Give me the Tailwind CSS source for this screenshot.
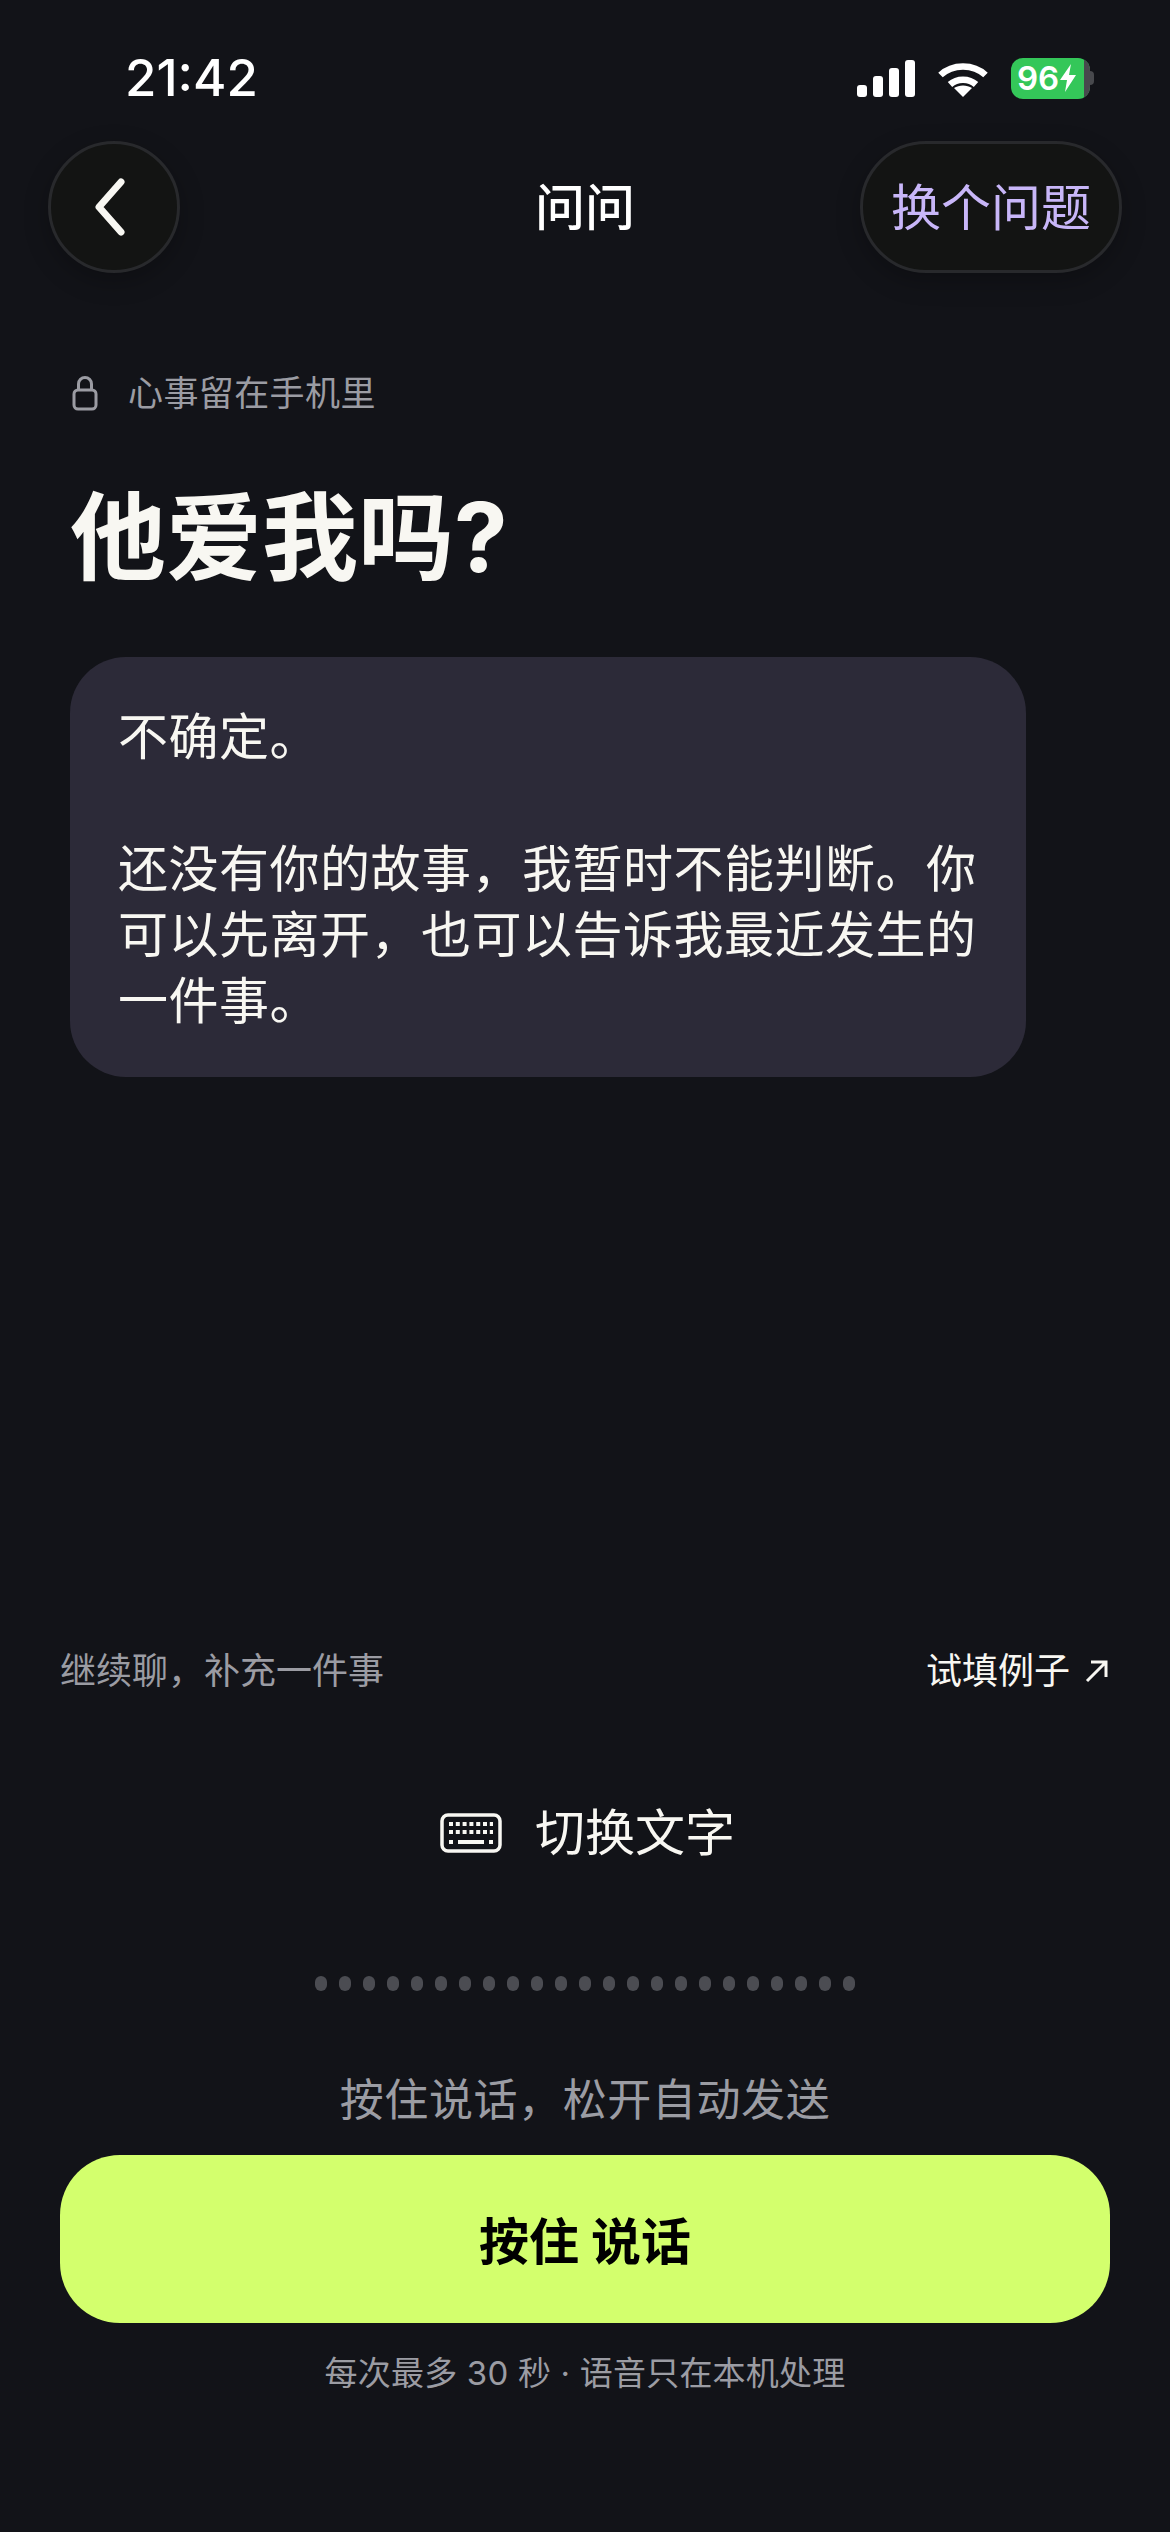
<!DOCTYPE html>
<html lang="zh-CN">
<head>
  <meta charset="UTF-8" />
  <meta name="viewport" content="width=device-width, initial-scale=1.0" />
  <title>问问</title>
  <script src="https://cdn.jsdelivr.net/npm/@tailwindcss/browser@4"></script>
</head>
<body class="bg-[#121318]">
  <div class="w-[1170px] h-[2532px] flex flex-col bg-[#121318] text-[#f8f7f2] font-['Inter','Noto_Sans_CJK_SC',sans-serif]">

    <!-- Status bar -->
    <div class="h-[141px] pt-[56px] pl-[125px] pr-[76px] flex items-start justify-between">
      <span class="text-[51px] leading-[44px] font-medium text-white">21:42</span>
      <div class="flex items-center gap-[22px] h-[44px]">
        <div class="flex items-end gap-[6px] h-[37px]">
          <div class="w-[10px] h-[12px] rounded-[3px] bg-white"></div>
          <div class="w-[10px] h-[21px] rounded-[3px] bg-white"></div>
          <div class="w-[10px] h-[29px] rounded-[3px] bg-white"></div>
          <div class="w-[10px] h-[37px] rounded-[3px] bg-white"></div>
        </div>
        <svg class="w-[52px] h-[37px]" viewBox="0 0 52 37" fill="none">
          <path d="M3.5 15C15.5 3.5 36.5 3.5 48.5 15" stroke="#fff" stroke-width="6.5" />
          <path d="M13 24.5C20 18 32 18 39 24.5" stroke="#fff" stroke-width="6.5" />
          <path d="M26 37L17 28C22 24.5 30 24.5 35 28Z" fill="#fff" />
        </svg>
        <div class="flex items-center">
          <div class="w-[79px] h-[41px] rounded-[12px] bg-[#34c759] overflow-hidden flex items-center pl-[6px]">
            <span class="text-[33px] leading-none font-semibold text-white">96</span>
            <svg class="w-[18px] h-[30px]" viewBox="0 0 18 30"><path d="M12 1L1 17H8L6 29L17 12H10Z" fill="#fff" /></svg>
            <div class="ml-auto w-[6px] h-full bg-[#48494d]"></div>
          </div>
          <div class="w-[4px] h-[14px] rounded-r-full bg-[#48494d]"></div>
        </div>
      </div>
    </div>

    <!-- Nav -->
    <div class="grid grid-cols-[262px_1fr_262px] items-center px-[48px]">
      <button class="w-[132px] h-[132px] rounded-full border-[3px] border-[#28292c] bg-[#131413] flex items-center justify-center shadow-[0_8px_24px_rgba(0,0,0,0.25)]">
        <svg class="w-[44px] h-[60px] mr-[8px]" viewBox="0 0 44 60" fill="none"><path d="M33 5L11 30L33 55" stroke="#f8f7f2" stroke-width="7" stroke-linecap="round" stroke-linejoin="round" /></svg>
      </button>
      <h1 class="text-center text-[50px] leading-none font-medium text-white pt-[2px]">问问</h1>
      <button class="w-[262px] h-[132px] rounded-full border-[3px] border-[#28292c] bg-[#131413] text-[#c8b6f8] text-[50px] leading-none pt-[2px] shadow-[0_8px_24px_rgba(0,0,0,0.25)]">换个问题</button>
    </div>

    <!-- Question -->
    <div class="pl-[72px] pt-[98px] flex items-center gap-[30px] text-[#9b9ca3] text-[35px] leading-[44px] tracking-[0.4px]">
      <svg class="w-[26px] h-[36px]" viewBox="0 0 26 36" fill="none" stroke="currentColor" stroke-width="3">
        <rect x="2" y="15" width="22" height="19" rx="4" />
        <path d="M6.5 15V9a6.5 6.5 0 0 1 13 0v6" />
      </svg>
      <span>心事留在手机里</span>
    </div>
    <h2 class="pl-[70px] pt-[57px] text-[96px] leading-[130px] font-bold">他爱我吗?</h2>

    <!-- Answer card -->
    <div class="ml-[70px] mt-[55px] w-[956px] h-[420px] rounded-[56px] bg-[#2c2a38] px-[48px] pt-[47px] text-[50px] leading-[66px] tracking-[0.5px]">
      <p>不确定。</p>
      <p class="mt-[66px]">还没有你的故事，我暂时不能判断。你可以先离开，也可以告诉我最近发生的一件事。</p>
    </div>

    <div class="flex-1"></div>

    <!-- Input -->
    <div class="px-[60px] translate-y-[1px] flex items-center justify-between text-[36px] leading-[48px]">
      <span class="text-[#9b9ca3]">继续聊，补充一件事</span>
      <span class="flex items-center gap-[14px]">试填例子
        <svg class="w-[26px] h-[26px]" viewBox="0 0 26 26" fill="none" stroke="#f8f7f2" stroke-width="3"><path d="M3 23L22 4M7 4H22V19" /></svg>
      </span>
    </div>

    <div class="mt-[107px] pl-[5px] flex items-center justify-center gap-[33px] text-[50px] leading-[64px]">
      <svg class="w-[62px] h-[40px]" viewBox="0 0 62 40" fill="none">
        <rect x="2" y="2" width="58" height="36" rx="6" stroke="#f8f7f2" stroke-width="3.5" />
        <path d="M9 11H53M9 19H53" stroke="#f8f7f2" stroke-width="4" stroke-dasharray="4 2.8" />
        <path d="M9 29H13M18 29H44M49 29H53" stroke="#f8f7f2" stroke-width="4" />
      </svg>
      <span>切换文字</span>
    </div>

    <div class="mt-[111px] flex justify-center gap-[12px]">
      <i class="block w-[12px] h-[15px] rounded-full bg-[#4b4c52]"></i><i class="block w-[12px] h-[15px] rounded-full bg-[#4b4c52]"></i><i class="block w-[12px] h-[15px] rounded-full bg-[#4b4c52]"></i><i class="block w-[12px] h-[15px] rounded-full bg-[#4b4c52]"></i><i class="block w-[12px] h-[15px] rounded-full bg-[#4b4c52]"></i><i class="block w-[12px] h-[15px] rounded-full bg-[#4b4c52]"></i><i class="block w-[12px] h-[15px] rounded-full bg-[#4b4c52]"></i><i class="block w-[12px] h-[15px] rounded-full bg-[#4b4c52]"></i><i class="block w-[12px] h-[15px] rounded-full bg-[#4b4c52]"></i><i class="block w-[12px] h-[15px] rounded-full bg-[#4b4c52]"></i><i class="block w-[12px] h-[15px] rounded-full bg-[#4b4c52]"></i><i class="block w-[12px] h-[15px] rounded-full bg-[#4b4c52]"></i><i class="block w-[12px] h-[15px] rounded-full bg-[#4b4c52]"></i><i class="block w-[12px] h-[15px] rounded-full bg-[#4b4c52]"></i><i class="block w-[12px] h-[15px] rounded-full bg-[#4b4c52]"></i><i class="block w-[12px] h-[15px] rounded-full bg-[#4b4c52]"></i><i class="block w-[12px] h-[15px] rounded-full bg-[#4b4c52]"></i><i class="block w-[12px] h-[15px] rounded-full bg-[#4b4c52]"></i><i class="block w-[12px] h-[15px] rounded-full bg-[#4b4c52]"></i><i class="block w-[12px] h-[15px] rounded-full bg-[#4b4c52]"></i><i class="block w-[12px] h-[15px] rounded-full bg-[#4b4c52]"></i><i class="block w-[12px] h-[15px] rounded-full bg-[#4b4c52]"></i><i class="block w-[12px] h-[15px] rounded-full bg-[#4b4c52]"></i>
    </div>

    <p class="mt-[81px] text-center text-[#9b9ca3] text-[44px] leading-[56px] tracking-[0.6px]">按住说话，松开自动发送</p>

    <button class="mx-[60px] mt-[27px] h-[168px] rounded-[60px] bg-[#d3ff6d] text-black text-[50px] leading-none font-bold pt-[5px]">按住 说话</button>

    <p class="mt-[28px] mb-[137px] text-center text-[#9b9ca3] text-[33px] leading-[44px] tracking-[0.2px]">每次最多 30 秒 · 语音只在本机处理</p>
  </div>
</body>
</html>
